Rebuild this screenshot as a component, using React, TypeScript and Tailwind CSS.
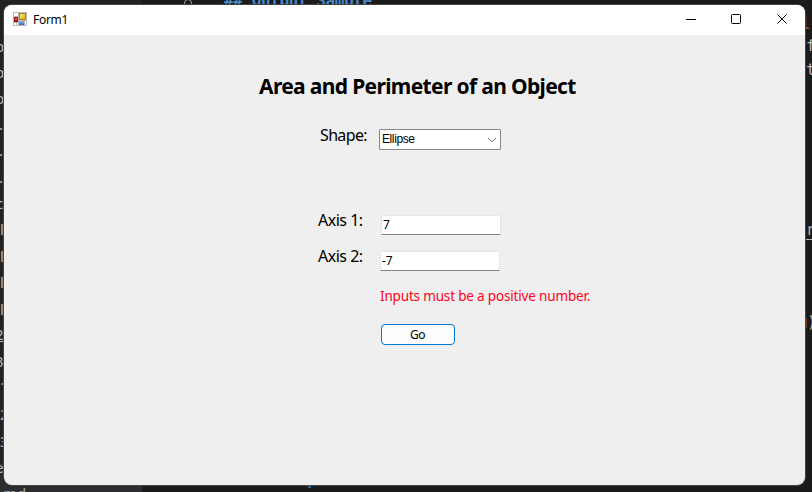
import React from "react";

type Fragment = { text: string; className: string };

// Editor text that peeks out from behind the window.
const leftFragments: Fragment[] = [
  { text: "p", className: "top-[36px] left-[-5px]" },
  { text: "p", className: "top-[62px] left-[-5px]" },
  { text: "p", className: "top-[88px] left-[-5px]" },
  { text: ".", className: "top-[114px] left-[-1px]" },
  { text: ".", className: "top-[140px] left-[-1px]" },
  { text: ".", className: "top-[167px] left-[-1px]" },
  { text: "c", className: "top-[193px] left-[-4px]" },
  { text: "l", className: "top-[219px] left-0" },
  { text: "l", className: "top-[246px] left-0" },
  { text: "l", className: "top-[272px] left-0" },
  { text: "l", className: "top-[299px] left-0" },
  { text: "2", className: "top-[324px] left-[-5px] underline" },
  { text: "3", className: "top-[351px] left-[-5px]" },
  { text: "1", className: "top-[376px] left-0" },
  { text: "2", className: "top-[404px] left-0" },
  { text: "3", className: "top-[431px] left-0" },
  { text: "e", className: "top-[457px] left-[-5px]" },
  { text: "md", className: "top-[483px] left-[3px] text-[#a8a8a8]" },
];

function Editor() {
  return (
    <div className="absolute inset-0 flex bg-[#1b1b1c] font-['DejaVu_Sans_Mono',monospace] text-[#b8b8b8]">
      <div className="flex w-[142px] flex-col justify-end bg-[#222223]">
        <div className="h-[28px] bg-[#2d2d31]" />
      </div>
      {leftFragments.map((f, i) => (
        <span key={i} className={`absolute font-['Noto_Sans',sans-serif] text-[15px] leading-5 ${f.className}`}>
          {f.text}
        </span>
      ))}
      <span className="absolute left-[184px] top-[-1px] size-[8px] rounded-full border border-[#a0a0a0]" />
      <span className="absolute left-[224px] top-[-9px] whitespace-pre text-[16px] font-bold leading-5 tracking-[-0.4px] text-[#4787c4]">
        ## Output Sample
      </span>
      <span className="absolute left-[801px] top-[14px] text-[16px] leading-5 text-[#a85b4b]">l</span>
      <span className="absolute left-[806px] top-[36px] text-[16px] leading-5">f</span>
      <span className="absolute left-[806px] top-[60px] text-[16px] leading-5">t</span>
      <span className="absolute left-[797px] top-[220px] text-[15px] leading-5 underline underline-offset-4">or</span>
      <span className="absolute left-[798px] top-[312px] text-[16px] leading-5 tracking-[-0.6px]">
        <span className="underline underline-offset-2">g</span>)
      </span>
      <span className="absolute left-[308px] top-[485px] h-[3px] w-[3px] bg-[#2c6592]" />
    </div>
  );
}

function FormIcon() {
  return (
    <svg width="14" height="14" viewBox="0 0 14 14" shapeRendering="crispEdges">
      <defs>
        <linearGradient id="gold" x1="0" y1="0" x2="1" y2="1">
          <stop offset="0" stopColor="#ffe98a" />
          <stop offset="1" stopColor="#e9a900" />
        </linearGradient>
        <linearGradient id="azure" x1="0" y1="0" x2="0" y2="1">
          <stop offset="0" stopColor="#8fb8ff" />
          <stop offset="1" stopColor="#2c62cf" />
        </linearGradient>
      </defs>
      <rect width="14" height="14" fill="#b9b9b9" />
      <path d="M1 1h4v3H1zM1 11h2v2H1zM4 11h1v2H4zM12 9h1v4h-1z" fill="#fff" />
      <rect x="6" y="1" width="7" height="7" fill="#b88408" />
      <rect x="7" y="2" width="5" height="5" fill="url(#gold)" />
      <rect x="1" y="5" width="4" height="5" fill="#a11212" />
      <rect x="2" y="6" width="2" height="2" fill="#e05a48" />
      <rect x="6" y="9" width="5" height="4" fill="url(#azure)" />
    </svg>
  );
}

function TitleBar() {
  return (
    <header className="flex h-[30px] items-center bg-white pl-[9px] text-black">
      <div className="-mt-[2px]">
        <FormIcon />
      </div>
      <span className="ml-[6px] text-[12px] leading-4 tracking-[-0.3px]">Form1</span>
      <div className="ml-auto flex h-full items-center">
        <svg width="138" height="30" viewBox="0 0 138 30" fill="none" stroke="#000">
          <path d="M19 14.5h10" />
          <rect x="64.5" y="9.5" width="9" height="9" rx="1" />
          <path d="M110.4 9.4l9.2 9.2M119.6 9.4l-9.2 9.2" />
        </svg>
      </div>
    </header>
  );
}

function Field({ value, className }: { value: string; className: string }) {
  return (
    <div
      className={`flex h-[20px] w-[120px] items-center border border-[#e6e6e6] border-b-[#868686] bg-white text-[12px] leading-4 ${className}`}
    >
      {value}
    </div>
  );
}

export default function App() {
  return (
    <div className="relative h-[492px] w-[812px] overflow-hidden font-['Noto_Sans',sans-serif] text-black">
      <Editor />
      <div className="absolute left-[4px] top-[5px] flex h-[480px] w-[801px] flex-col overflow-hidden rounded-lg bg-[#efefef] shadow-[0_0_0_1px_#454545]">
        <TitleBar />
        <main className="flex flex-col">
          <h1 className="ml-[255px] mt-[36px] h-[30px] whitespace-nowrap text-[21px] font-bold leading-[30px] tracking-[-0.65px]">
            Area and Perimeter of an Object
          </h1>

          <div className="mt-[22px] flex h-[29px]">
            <div className="w-[375px] pl-[316px] text-[16px] leading-6 tracking-[-0.65px]">Shape:</div>
            <div className="mt-[6px] flex h-[21px] w-[122px] items-center justify-between rounded-[1px] border border-[#868686] bg-white pl-[2px] pr-[3px]">
              <span className="-mt-px font-['Liberation_Sans',sans-serif] text-[12px] leading-4 tracking-[-0.4px]">
                Ellipse
              </span>
              <svg width="10" height="6" viewBox="0 0 10 6" fill="none" stroke="#606060">
                <path d="M1 .8l4 4 4-4" />
              </svg>
            </div>
          </div>

          <div className="mt-[56px] flex h-[27px]">
            <div className="w-[377px] pl-[314px] text-[16px] leading-6 tracking-[-0.5px]">Axis 1:</div>
            <Field value="7" className="mt-[7px] pl-px" />
          </div>
          <div className="mt-[9px] flex h-[27px]">
            <div className="w-[376px] pl-[314px] text-[16px] leading-6 tracking-[-0.5px]">Axis 2:</div>
            <Field value="-7" className="mt-[7px] pl-px" />
          </div>

          <p className="ml-[376px] mt-[13px] h-[25px] whitespace-nowrap text-[13.5px] leading-6 tracking-[-0.17px] text-[#ff0020]">
            Inputs must be a positive number.
          </p>
          <button className="ml-[377px] mt-[15px] h-[21px] w-[74px] rounded-[4px] border border-[#0078d4] bg-[#fdfdfd] pr-px text-[12px] leading-[19px] tracking-[-0.4px]">
            Go
          </button>
        </main>
      </div>
    </div>
  );
}
